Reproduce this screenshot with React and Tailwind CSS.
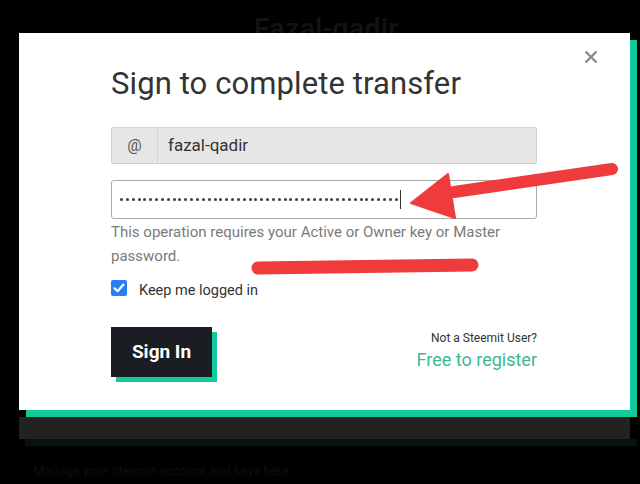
import React from "react";

export default function App() {
  const dots = Array.from({ length: 48 });
  return (
    <div className="relative w-[640px] h-[484px] bg-black overflow-hidden" style={{ fontFamily: "Roboto, 'Noto Sans', sans-serif" }}>
      <div className="h-[33px] overflow-hidden flex justify-center pl-[12px]">
        <div className="pt-[15px] text-[29px] leading-none font-medium text-[#131313]">Fazal-qadir</div>
      </div>

      <div className="relative ml-[19px] w-[611px] h-[377px] bg-white shadow-[7px_7px_0_#11c99b] pl-[92px] pr-[93px] pt-[33px]">
        <button className="absolute left-[565px] top-[17px] w-[14px] h-[14px]">
          <svg viewBox="0 0 14 14" width="14" height="14">
            <path d="M1.5 1.5 L12.5 12.5 M12.5 1.5 L1.5 12.5" stroke="#8a8a8a" strokeWidth="2.4" strokeLinecap="butt" />
          </svg>
        </button>

        <h1 className="text-[31px] leading-[36px] text-[#333] font-normal tracking-[0.1px]">Sign to complete transfer</h1>

        <div className="mt-[25px] flex h-[37px] border border-[#d2d2d2] bg-[#e6e6e6] rounded-[2px]">
          <div className="w-[46px] flex items-center justify-center border-r border-[#d2d2d2] text-[16px] text-[#555]">@</div>
          <div className="flex items-center pl-[10px] text-[17px] text-[#333]">fazal-qadir</div>
        </div>

        <div className="mt-[16px] flex items-center h-[39px] border border-[#a9a9a9] rounded-[3px] bg-white pl-[8px]">
          <div className="flex items-center gap-[2.85px]">
            {dots.map((_, i) => (
              <div key={i} className="w-[3px] h-[3px] rounded-full bg-[#3a3a3a]" />
            ))}
          </div>
          <div className="ml-[2px] w-[1.5px] h-[19px] bg-[#333]" />
        </div>

        <p className="mt-[1px] pr-[30px] text-[15px] leading-[24px] text-[#7a7a7a]">
          This operation requires your Active or Owner key or Master password.
        </p>

        <label className="mt-[12px] flex items-start h-[17px]">
          <span className="w-[16px] h-[16px] rounded-[2px] bg-[#2a7df4] flex items-center justify-center">
            <svg viewBox="0 0 16 16" width="16" height="16">
              <path d="M3.5 8.3 L6.6 11.2 L12.5 4.6" stroke="white" strokeWidth="2.2" fill="none" strokeLinecap="round" strokeLinejoin="round" />
            </svg>
          </span>
          <span className="ml-[12px] mt-[2px] text-[14.5px] leading-[18px] text-[#333]">Keep me logged in</span>
        </label>

        <div className="mt-[30px] flex justify-between items-start">
          <button className="w-[101px] h-[50px] bg-[#1a1e22] text-white text-[19px] font-bold shadow-[5px_5px_0_#11c99b]">Sign In</button>
          <div className="flex flex-col items-end pt-[2px]">
            <div className="text-[12px] leading-[18px] text-[#333]">Not a Steemit User?</div>
            <div className="mt-[2px] text-[18px] leading-[22px] text-[#3bb98d]">Free to register</div>
          </div>
        </div>
      </div>

      <div className="mt-[7px] ml-[19px] w-[611px] h-[22px] bg-[#222]" />
      <div className="ml-[25px] w-[612px] h-[7px] bg-[#04140f]" />
      <div className="mt-[15px] ml-[33px] text-[13px] text-[#0e0e0e]">Manage your Steemit account and keys here</div>

      <svg className="absolute left-0 top-0 pointer-events-none" width="640" height="484" viewBox="0 0 640 484">
        <line x1="454" y1="192" x2="612" y2="169" stroke="#ef3b3b" strokeWidth="12" strokeLinecap="round" />
        <polygon points="411,203 448,174 455,218" fill="#ef3b3b" stroke="#ef3b3b" strokeWidth="2" strokeLinejoin="round" />
        <line x1="258" y1="268" x2="472" y2="265" stroke="#ef3b3b" strokeWidth="13" strokeLinecap="round" />
      </svg>
    </div>
  );
}
